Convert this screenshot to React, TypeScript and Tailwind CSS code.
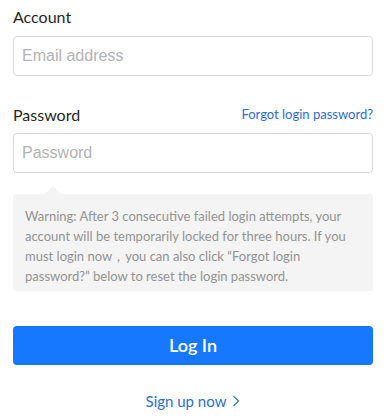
import React from "react";

export default function App() {
  return (
    <div className="w-[386px] h-[418px] bg-white px-[13px] pt-[5px] font-['Lato',sans-serif]">
      {/* Account */}
      <div className="text-[16px] leading-[24px] text-[#262626]">Account</div>
      <input
        type="text"
        placeholder="Email address"
        className="mt-[7px] block w-full h-[40px] rounded-[4px] border border-[#d9d9d9] px-[8px] text-[16px] font-['Liberation_Sans',Arial,sans-serif] text-[#333] placeholder:text-[#b3b3b3] outline-none"
      />

      {/* Password */}
      <div className="mt-[27px] flex items-center justify-between h-[24px]">
        <span className="text-[16px] leading-[24px] text-[#262626]">Password</span>
        <a className="text-[13px] text-[#2a6fd2] cursor-pointer">Forgot login password?</a>
      </div>
      <input
        type="password"
        placeholder="Password"
        className="mt-[6px] block w-full h-[40px] rounded-[4px] border border-[#d9d9d9] px-[8px] text-[16px] font-['Liberation_Sans',Arial,sans-serif] text-[#333] placeholder:text-[#b3b3b3] outline-none"
      />

      {/* Warning tip */}
      <div className="relative mt-[21px] rounded-[3px] bg-[#f4f4f4] px-[12px] pt-[12px] pb-[5px] text-[13px] leading-[20px] text-[#939393] whitespace-nowrap">
        <span className="absolute -top-[8px] left-[32px] h-0 w-0 border-x-[8px] border-b-[8px] border-x-transparent border-b-[#f4f4f4]" />
        Warning: After 3 consecutive failed login attempts, your
        <br />
        account will be temporarily locked for three hours. If you
        <br />
        must login now，you can also click “Forgot login
        <br />
        password?” below to reset the login password.
      </div>

      {/* Log In */}
      <button className="mt-[35px] block w-full h-[39px] rounded-[4px] bg-[#1677ff] text-[18px] font-semibold text-white">
        Log In
      </button>

      <div className="mt-[25px] flex h-[22px] items-center justify-center gap-[6px] text-[15px] text-[#2a6fd2]">
        <span>Sign up now</span>
        <svg width="8" height="12" viewBox="0 0 8 12" fill="none" stroke="currentColor" strokeWidth="1.1">
          <path d="M1.5 1l5 5-5 5" />
        </svg>
      </div>
    </div>
  );
}
